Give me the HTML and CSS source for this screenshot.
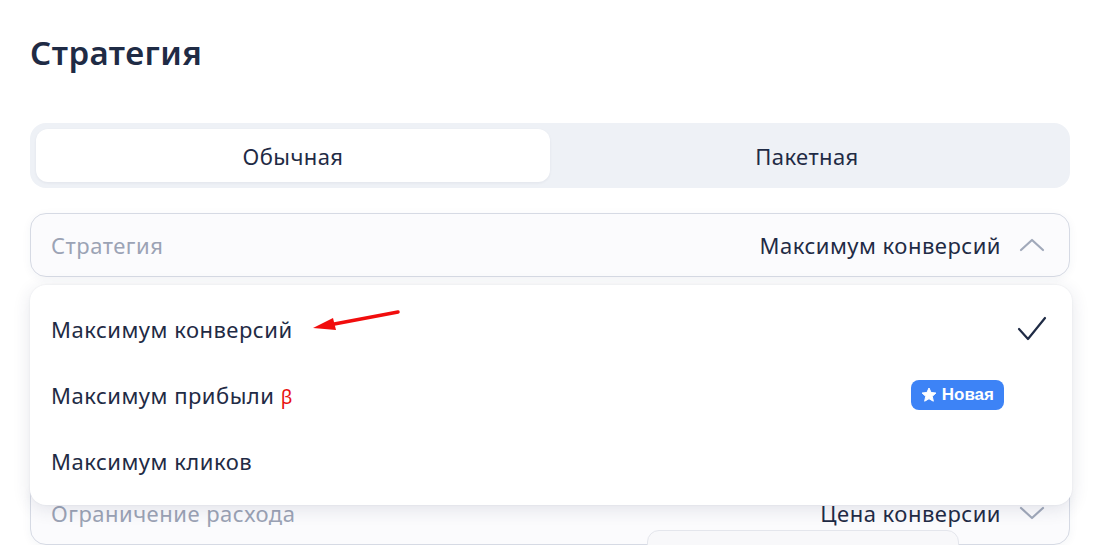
FILE: index.html
```html
<!DOCTYPE html>
<html>

<head>
  <meta http-equiv="Content-Type" content="text/html; charset=UTF-8">
  <title>Стратегия</title>
  <link rel="stylesheet" href="styles.css">
</head>

<body>

  <h1 class="titulo">Стратегия</h1>

  <div class="segmentos">
    <div class="segmento activo">Обычная</div>
    <div class="segmento">Пакетная</div>
  </div>

  <div class="grupo">
    <div class="campo">
      <span class="etiqueta">Стратегия</span>
      <span class="valor">Максимум конверсий</span>
      <svg class="flecha" width="26" height="14" viewBox="0 0 26 14">
        <path d="M2 12 L13 2 L24 12" fill="none" stroke="#a1a9ba" stroke-width="2.2" stroke-linecap="round" stroke-linejoin="round" />
      </svg>
    </div>

    <div class="menu">
      <div class="opcion">
        <span>Максимум конверсий</span>
        <svg class="check" width="30" height="26" viewBox="0 0 30 26">
          <path d="M2 13 L11 23 L28 2" fill="none" stroke="#1f2b45" stroke-width="2.2" stroke-linecap="round" stroke-linejoin="round" />
        </svg>
      </div>
      <div class="opcion">
        <span>Максимум прибыли <span class="beta">β</span></span>
        <span class="nueva">
          <svg width="16" height="16" viewBox="0 0 24 24">
            <path d="M12 1.5 L15.1 8.2 L22.4 9 L16.9 14 L18.5 21.3 L12 17.6 L5.5 21.3 L7.1 14 L1.6 9 L8.9 8.2 Z" fill="#fff" stroke="#fff" stroke-width="1.5" stroke-linejoin="round" />
          </svg>
          Новая
        </span>
      </div>
      <div class="opcion">
        <span>Максимум кликов</span>
      </div>
    </div>

    <!-- flecha roja de la captura -->
    <svg class="marca" width="100" height="30" viewBox="0 0 100 30">
      <path d="M97 4 L28 17" stroke="#f10d0d" stroke-width="3.5" stroke-linecap="round" />
      <path d="M12 20 L32 10 L35 22 Z" fill="#f10d0d" />
    </svg>
  </div>

  <div class="campo segundo">
    <span class="etiqueta">Ограничение расхода</span>
    <span class="valor">Цена конверсии</span>
    <svg class="flecha" width="26" height="14" viewBox="0 0 26 14">
      <path d="M2 2 L13 12 L24 2" fill="none" stroke="#a1a9ba" stroke-width="2.2" stroke-linecap="round" stroke-linejoin="round" />
    </svg>
    <div class="aviso"></div>
  </div>

</body>

</html>
```

FILE: styles.css
```css
body {
  margin: 0;
  padding: 0 30px;
  background: #fff;
  font-family: "Noto Sans", "Open Sans", sans-serif;
  color: #1f2b45;
  overflow: hidden;
}

.titulo {
  margin: 30px 0 0 0;
  font-size: 33px;
  line-height: 45px;
  font-weight: 600;
  letter-spacing: 0.5px;
  color: #1f2b45;
}

.segmentos {
  margin-top: 48px;
  display: flex;
  padding: 6px;
  background: #eef1f6;
  border-radius: 16px;
  height: 53px;
}

.segmento {
  flex: 1;
  display: flex;
  align-items: center;
  justify-content: center;
  font-size: 22px;
  letter-spacing: 0.4px;
  border-radius: 12px;
}

.segmento.activo {
  background: #fff;
  box-shadow: 0 1px 3px rgba(30, 40, 70, 0.06);
}

.grupo {
  position: relative;
  margin-top: 25px;
}

.campo {
  position: relative;
  display: flex;
  align-items: center;
  height: 62px;
  padding: 0 24px 0 20px;
  border: 1px solid #d6dae4;
  border-radius: 16px;
  background: #fbfbfd;
  box-shadow: 0 2px 10px rgba(40, 50, 90, 0.05);
  font-size: 22px;
  letter-spacing: 0.5px;
}

.etiqueta {
  flex: 1;
  color: #9ba3b5;
}

.valor {
  margin-right: 18px;
}

.menu {
  position: absolute;
  top: 72px;
  left: 0;
  right: -2px;
  z-index: 2;
  background: #fff;
  border-radius: 16px;
  padding: 11px 0;
  box-shadow: 0 4px 18px rgba(40, 50, 90, 0.12), 0 0 2px rgba(40, 50, 90, 0.08);
}

.opcion {
  display: flex;
  align-items: center;
  justify-content: space-between;
  height: 66px;
  padding: 0 24px 0 21px;
  font-size: 22px;
  letter-spacing: 0.5px;
}

.check {
  margin-right: 1px;
}

.beta {
  color: #e8110f;
  font-size: 19px;
}

.nueva {
  display: flex;
  align-items: center;
  gap: 5px;
  margin-right: 44px;
  height: 30px;
  padding: 0 10px 0 10px;
  background: #3d83f6;
  border-radius: 8px;
  color: #fff;
  font-family: "Liberation Sans", Arial, sans-serif;
  font-weight: bold;
  font-size: 17px;
  letter-spacing: 0;
}

.marca {
  position: absolute;
  top: 95px;
  left: 271px;
  z-index: 3;
}

.segundo {
  margin-top: 204px;
}

.aviso {
  position: absolute;
  left: 616px;
  top: 48px;
  width: 310px;
  height: 40px;
  background: #f8f8fa;
  border: 1px solid #e4e6ec;
  border-radius: 12px;
}
```
